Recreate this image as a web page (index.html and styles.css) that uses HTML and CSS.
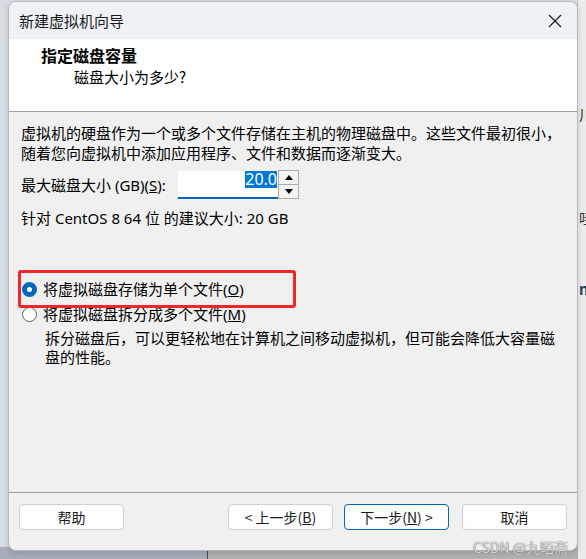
FILE: index.html
```html
<!DOCTYPE html>
<html>
<head>
    <title>新建虚拟机向导</title>
    <link rel="stylesheet" href="styles.css">
</head>
<body>
    <div class="side-strip">
        <span class="frag frag-1">川</span>
        <span class="frag frag-2">哇</span>
        <span class="frag frag-3">nt</span>
    </div>
    <div class="bottom-strip">
        <div class="bottom-left"></div>
        <div class="bottom-right"></div>
    </div>

    <div class="dialog">
        <div class="titlebar">
            <span class="title">新建虚拟机向导</span>
            <svg class="close" width="14" height="14" viewBox="0 0 14 14">
                <path d="M1 1 L13 13 M13 1 L1 13" stroke="#1b1b1b" stroke-width="1.2" fill="none"/>
            </svg>
        </div>

        <div class="header">
            <div class="header-title">指定磁盘容量</div>
            <div class="header-sub">磁盘大小为多少?</div>
        </div>

        <div class="content">
            <p class="intro">虚拟机的硬盘作为一个或多个文件存储在主机的物理磁盘中。这些文件最初很小，<br>随着您向虚拟机中添加应用程序、文件和数据而逐渐变大。</p>

            <div class="size-row">
                <span class="label">最大磁盘大小 (GB)(<u>S</u>):</span>
                <div class="number-input">
                    <span class="selected">20.0</span>
                </div>
                <div class="spinner">
                    <div class="spin-btn">
                        <svg width="8" height="5" viewBox="0 0 8 5"><path d="M0 5 L4 0 L8 5 Z" fill="#000"/></svg>
                    </div>
                    <div class="spin-btn">
                        <svg width="8" height="5" viewBox="0 0 8 5"><path d="M0 0 L4 5 L8 0 Z" fill="#000"/></svg>
                    </div>
                </div>
            </div>

            <div class="hint">针对 CentOS 8 64 位 的建议大小: 20 GB</div>

            <div class="radio-row first">
                <span class="radio checked"></span>
                <span>将虚拟磁盘存储为单个文件(<u>O</u>)</span>
            </div>
            <div class="radio-row">
                <span class="radio"></span>
                <span>将虚拟磁盘拆分成多个文件(<u>M</u>)</span>
            </div>
            <p class="radio-desc">拆分磁盘后，可以更轻松地在计算机之间移动虚拟机，但可能会降低大容量磁<br>盘的性能。</p>

            <div class="mark"></div>
        </div>

        <div class="footer">
            <button class="btn">帮助</button>
            <div class="spacer"></div>
            <button class="btn">&lt; 上一步(<u>B</u>)</button>
            <button class="btn primary">下一步(<u>N</u>) &gt;</button>
            <button class="btn cancel">取消</button>
        </div>
    </div>

    <div class="watermark">CSDN @九陌斋</div>
</body>
</html>
```

FILE: styles.css
```css
body {
    margin: 0;
    width: 586px;
    height: 559px;
    overflow: hidden;
    position: relative;
    background: #d8dde4;
    font-family: "Noto Sans", "Noto Sans CJK SC", sans-serif;
    color: #000;
}

/* desktop bits around the window */
.side-strip {
    position: absolute;
    top: 0;
    right: 0;
    width: 8px;
    height: 559px;
    background: #ececec;
    border-left: 1px solid #c4c4c4;
    overflow: hidden;
}

.frag {
    position: absolute;
    left: 1px;
    font-size: 15px;
    line-height: 18px;
    font-family: "Noto Sans CJK SC", sans-serif;
}

.frag-1 { top: 106px; color: #333; }
.frag-2 { top: 209px; color: #333; }
.frag-3 { top: 280px; color: #1d3f6e; font-weight: bold; }

.bottom-strip {
    position: absolute;
    left: 0;
    bottom: 0;
    width: 578px;
    height: 12px;
    display: flex;
}

.bottom-left {
    width: 207px;
    background: #a6aeb8;
    border-right: 1px solid #4a4f55;
}

.bottom-right {
    flex: 1;
    background: #b2b2b2;
}

/* the window */
.dialog {
    position: absolute;
    left: 8px;
    top: 1px;
    width: 568px;
    height: 548px;
    border: 1px solid #b4b9c0;
    border-radius: 8px;
    overflow: hidden;
    background: #f0f0f0;
    display: flex;
    flex-direction: column;
    box-shadow: 0 2px 6px rgba(0, 0, 0, 0.15);
}

.titlebar {
    height: 37px;
    background: #eef2f7;
    display: flex;
    align-items: center;
    justify-content: space-between;
    padding: 0 15px 0 10px;
}

.title {
    font-family: "Noto Sans CJK SC", sans-serif;
    font-size: 15px;
    color: #1a1a1a;
}

.header {
    height: 72px;
    background: #fff;
    border-bottom: 1px solid #a0a0a0;
    font-family: "Noto Sans CJK SC", sans-serif;
}

.header-title {
    font-weight: bold;
    font-size: 16px;
    line-height: 20px;
    margin: 6px 0 0 32px;
}

.header-sub {
    font-size: 15px;
    line-height: 24px;
    margin-left: 65px;
}

.content {
    flex: 1;
    position: relative;
    padding: 0 0 0 12px;
    font-size: 15px;
}

.intro {
    margin: 11px 0 0;
    line-height: 20px;
    font-family: "Noto Sans CJK SC", sans-serif;
}

.size-row {
    display: flex;
    align-items: center;
    margin-top: 7px;
    height: 29px;
}

.label {
    width: 157px;
    line-height: 20px;
}

.number-input {
    width: 100px;
    height: 26px;
    background: #fff;
    border-bottom: 2px solid #0067c0;
    display: flex;
    justify-content: flex-end;
    align-items: flex-start;
    margin-top: 1px;
}

.selected {
    background: #0078d7;
    color: #fff;
    font-size: 16px;
    line-height: 17px;
    margin-right: 1px;
}

.spinner {
    width: 19px;
    height: 27px;
    border: 1px solid #adadad;
    background: #f3f3f3;
    display: flex;
    flex-direction: column;
}

.spin-btn {
    flex: 1;
    display: flex;
    align-items: center;
    justify-content: center;
}

.spin-btn + .spin-btn {
    border-top: 1px solid #adadad;
}

.hint {
    margin-top: 9px;
    line-height: 20px;
}

.radio-row {
    display: flex;
    align-items: center;
    gap: 6px;
    line-height: 20px;
    margin-top: 5px;
}

.radio-row.first {
    margin-top: 51px;
}

.radio {
    width: 13px;
    height: 13px;
    border: 1px solid #5f5f5f;
    border-radius: 50%;
    background: #fff;
    margin-left: 1px;
}

.radio.checked {
    width: 5px;
    height: 5px;
    border: 5px solid #0067c0;
}

.radio-desc {
    margin: 4px 0 0 24px;
    line-height: 19px;
    font-family: "Noto Sans CJK SC", sans-serif;
}

/* red highlight drawn over the first option */
.mark {
    position: absolute;
    left: 9px;
    top: 158px;
    width: 272px;
    height: 32px;
    border: 3px solid #f0262a;
    border-radius: 3px;
}

.footer {
    height: 46px;
    border-top: 1px solid #a0a0a0;
    display: flex;
    align-items: flex-start;
    padding: 11px 10px 0 10px;
    gap: 11px;
}

.spacer {
    flex: 1;
}

.btn {
    width: 105px;
    height: 26px;
    background: #fdfdfd;
    border: 1px solid #d0d0d0;
    border-radius: 4px;
    font-family: "Noto Sans CJK SC", sans-serif;
    font-size: 14px;
    color: #1a1a1a;
    padding: 0;
}

.btn.primary {
    border-color: #0067c0;
}

.btn.cancel {
    margin-left: 2px;
}

.watermark {
    position: absolute;
    right: 18px;
    bottom: 2px;
    font-family: "Noto Sans CJK SC", sans-serif;
    font-size: 14px;
    color: rgba(255, 255, 255, 0.75);
    text-shadow: 0 0 1px #6b6b6b, 0 0 1px #6b6b6b;
}
```
